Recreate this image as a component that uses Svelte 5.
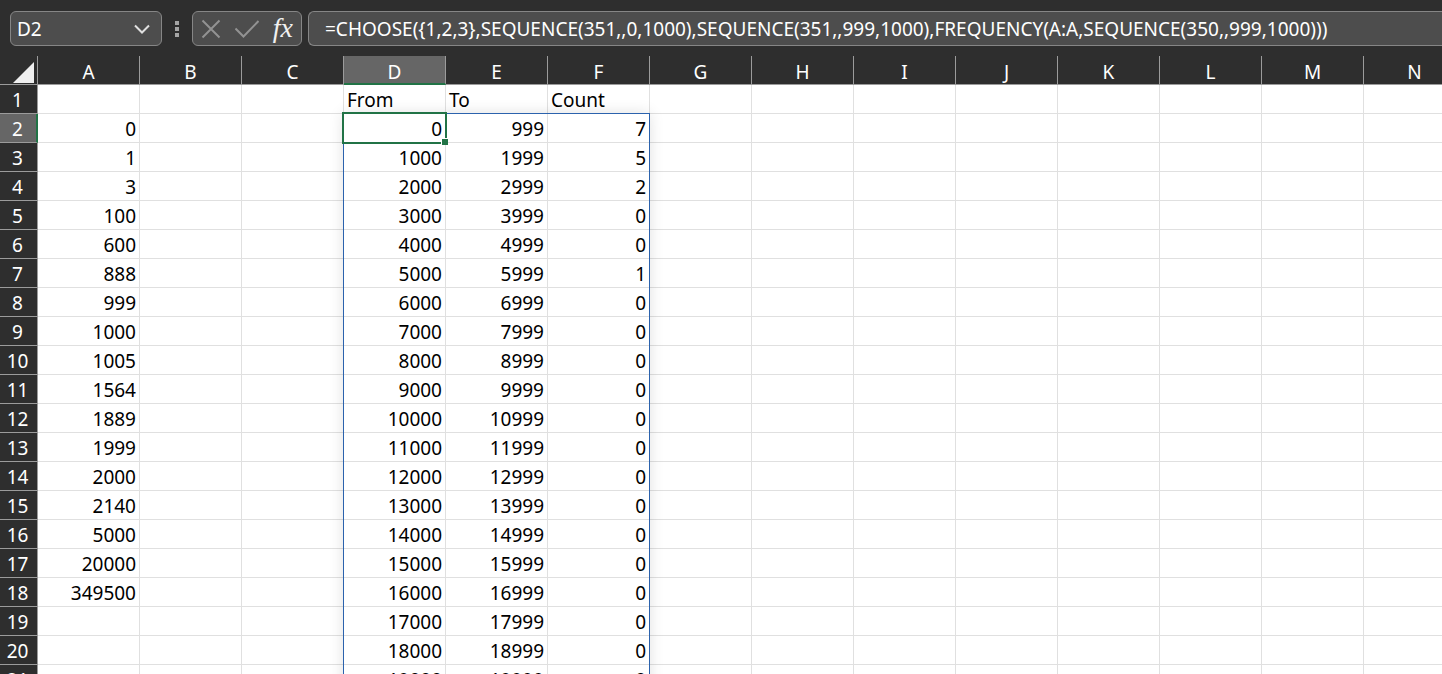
<script>
  const columns = 'ABCDEFGHIJKLMN'.split('');
  const source = [0, 1, 3, 100, 600, 888, 999, 1000, 1005, 1564, 1889, 1999, 2000, 2140, 5000, 20000, 349500];
  const counts = [7, 5, 2, 0, 0, 1];
  const active = { column: 'D', row: 2 };

  const rows = Array.from({ length: 21 }, (_, i) => {
    const row = i + 1;
    if (row === 1) return { row, cells: { D: 'From', E: 'To', F: 'Count' } };
    const n = row - 2;
    return {
      row,
      cells: { A: source[n] ?? '', D: n * 1000, E: n * 1000 + 999, F: counts[n] ?? 0 }
    };
  });

  let name = $state('D2');
  let formula = $state(
    '=CHOOSE({1,2,3},SEQUENCE(351,,0,1000),SEQUENCE(351,,999,1000),FREQUENCY(A:A,SEQUENCE(350,,999,1000)))'
  );
</script>

<main>
  <header>
    <div class="box name">
      <input aria-label="Name box" bind:value={name} />
      <button aria-label="Show names">
        <svg width="16" height="10" viewBox="0 0 16 10"><path d="M1 1.500 8 8.500 15 1.500" /></svg>
      </button>
    </div>
    <svg class="grip" width="4" height="16" viewBox="0 0 4 16">
      <path d="M0 0h4v4H0zM0 6h4v4H0zM0 12h4v4H0z" />
    </svg>
    <div class="box tools">
      <button aria-label="Cancel">
        <svg width="20" height="20" viewBox="0 0 20 20"><path d="m1.500 1.500 17 17m0-17-17 17" /></svg>
      </button>
      <button aria-label="Enter">
        <svg width="24" height="20" viewBox="0 0 24 20"><path d="m0.500 9.500 8 8L23.500 2" /></svg>
      </button>
      <button class="fx" aria-label="Insert function">fx</button>
    </div>
    <div class="box formula">
      <input aria-label="Formula bar" spellcheck="false" bind:value={formula} />
    </div>
  </header>

  <div class="sheet">
    <table>
      <colgroup>
        <col class="index" />
        {#each columns as column}<col />{/each}
      </colgroup>
      <thead>
        <tr>
          <th>
            <button class="all" aria-label="Select all">
              <svg width="21" height="21" viewBox="0 0 21 21"><path d="M21 0v21H0z" /></svg>
            </button>
          </th>
          {#each columns as column}
            <th scope="col" class:current={column === active.column}>{column}</th>
          {/each}
        </tr>
      </thead>
      <tbody>
        {#each rows as { row, cells }}
          <tr>
            <th scope="row" class:current={row === active.row}>{row}</th>
            {#each columns as column}
              {@const isActive = column === active.column && row === active.row}
              <td class:text={row === 1} class:anchor={isActive}>
                {cells[column] ?? ''}
                {#if isActive}
                  <span class="spill"></span>
                  <span class="selection"></span>
                  <span class="handle"></span>
                {/if}
              </td>
            {/each}
          </tr>
        {/each}
      </tbody>
    </table>
  </div>
</main>

<style>
  :global(body) {
    margin: 0;
    background: #2e2e2e;
  }
  main {
    display: flex;
    flex-direction: column;
    height: 100vh;
    overflow: hidden;
    font-family: 'Noto Sans', sans-serif;
    font-size: 19px;
    color: #fff;
  }
  header {
    display: flex;
    align-items: center;
    flex: none;
    padding: 11px 0 10px 10px;
  }
  .box {
    display: flex;
    align-items: center;
    box-sizing: border-box;
    height: 35px;
    border: 1px solid #868686;
    border-radius: 6px;
    background: #4d4d4d;
  }
  input,
  button {
    margin: 0;
    padding: 0;
    border: 0;
    background: none;
    color: inherit;
    font: inherit;
    outline: 0;
  }
  input {
    flex: 1;
    min-width: 0;
  }
  button {
    display: flex;
    align-items: center;
    justify-content: center;
  }
  svg {
    display: block;
    fill: none;
    stroke: #929292;
    stroke-width: 2;
  }
  .name {
    width: 152px;
    padding: 0 11px 0 6px;
  }
  .name svg {
    stroke: #e0e0e0;
  }
  .grip {
    margin: 0 13px;
    fill: #a5a5a5;
    stroke: none;
  }
  .tools {
    width: 110px;
    padding: 0 8px;
    justify-content: space-between;
  }
  .fx {
    padding-bottom: 2px;
    font-family: 'Liberation Serif', serif;
    font-size: 28px;
    font-style: italic;
    line-height: 31px;
    color: #f0f0f0;
  }
  .formula {
    flex: 1;
    margin-left: 6px;
    padding-left: 16px;
    border-right: 0;
    border-radius: 6px 0 0 6px;
  }
  .sheet {
    flex: 1;
    min-height: 0;
    overflow: hidden;
    background: #fff;
  }
  table {
    width: max-content;
    table-layout: fixed;
    border-collapse: separate;
    border-spacing: 0;
  }
  col {
    width: 102px;
  }
  .index {
    width: 38px;
  }
  th,
  td {
    box-sizing: border-box;
    height: 29px;
    padding: 2px 3px 0;
    border-right: 1px solid #e0e0e0;
    border-bottom: 1px solid #e0e0e0;
    line-height: 26px;
    white-space: nowrap;
  }
  th {
    padding: 2px 0 0;
    border-color: #9b9b9b;
    background: #2e2e2e;
    font-weight: 400;
    text-align: center;
  }
  thead th {
    padding-top: 5px;
    line-height: 23px;
  }
  tbody th {
    padding-right: 2px;
  }
  .current {
    background: #666;
  }
  thead .current {
    border-bottom: 2px solid #217346;
    line-height: 22px;
  }
  tbody .current {
    padding-right: 1px;
    border-right: 2px solid #217346;
  }
  .all {
    width: 100%;
    padding-left: 10px;
  }
  .all svg {
    fill: #f0f0f0;
    stroke: none;
  }
  td {
    color: #000;
    text-align: right;
  }
  .text {
    text-align: left;
  }
  .anchor {
    position: relative;
  }
  .spill,
  .selection,
  .handle {
    position: absolute;
    box-sizing: border-box;
    pointer-events: none;
  }
  .spill {
    top: -1px;
    left: -1px;
    width: 307px;
    height: 800px;
    border: 1px solid #2b62ad;
    box-shadow: 0 0 14px rgba(0, 0, 0, 0.12);
  }
  .selection {
    inset: -2px;
    border: 2px solid #217346;
  }
  .handle {
    right: -3px;
    bottom: -3px;
    width: 7px;
    height: 7px;
    border: solid #fff;
    border-width: 1px 0 0 1px;
    background: #217346;
  }
</style>
